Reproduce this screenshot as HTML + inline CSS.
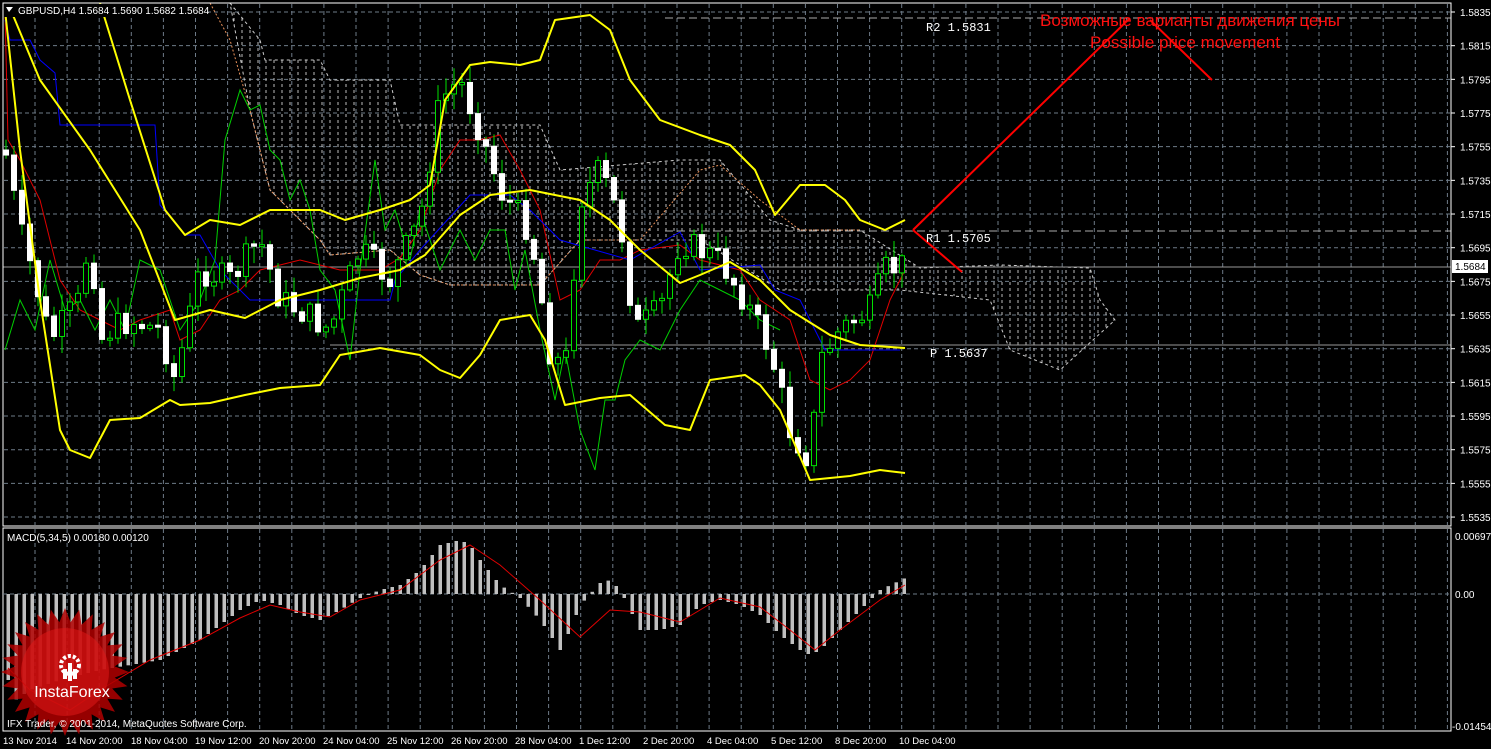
<!DOCTYPE html>
<html><head><meta charset="utf-8"><style>
html,body{margin:0;padding:0;background:#000;overflow:hidden}
svg{display:block;font-family:"Liberation Sans",sans-serif;font-size:11px}
text{fill:#fff}
</style></head><body>
<svg id="s" width="1491" height="749" xmlns="http://www.w3.org/2000/svg">
<defs>
<pattern id="dots" width="8" height="6" patternUnits="userSpaceOnUse">
<line x1="2" y1="0" x2="2" y2="3" stroke="#bbb" stroke-width="1"/>
</pattern>
</defs>
<rect width="1491" height="749" fill="#000"/>
<g id="grid" stroke="#6e7b88" stroke-dasharray="4,3" stroke-width="1"></g>
<polygon points="230,3 260,40 265,60 320,60 330,80 390,80 400,125 540,125 560,170 680,160 720,160 770,220 800,230 860,230 920,268 1000,265 1090,268 1100,300 1115,320 1060,370 1010,350 990,300 900,290 780,290 700,240 580,240 540,285 450,285 420,275 390,250 330,255 320,240 270,190 250,110" fill="url(#dots)" stroke="#ccc" stroke-dasharray="3,3" stroke-width="1"/>
<polyline points="210,3 230,40 250,110 270,190 320,240 330,255 390,250 420,275 450,285 540,285 580,240 640,240 700,170 720,165 760,200 800,230 860,230" fill="none" stroke="#e8915a" stroke-dasharray="2,2"/>
<line x1="665" y1="18" x2="1451" y2="18" stroke="#aaa" stroke-dasharray="8,4"/>
<line x1="665" y1="231" x2="1451" y2="231" stroke="#aaa" stroke-dasharray="8,4"/>
<line x1="3" y1="267" x2="1451" y2="267" stroke="#999"/>
<line x1="330" y1="345" x2="1451" y2="345" stroke="#999"/>
<polyline points="5,10 8,140 20,160 40,200 60,280 80,310 100,320 120,330 140,320 170,310 180,340 200,330 220,300 240,290 260,270 300,260 340,270 380,270 400,258 420,230 440,170 460,140 480,140 500,135 520,170 540,210 560,300 580,290 600,260 620,260 640,250 680,245 700,260 740,270 760,300 790,320 810,380 830,390 850,380 870,360 890,300 905,270" fill="none" stroke="#e00000" stroke-width="1"/>
<polyline points="5,20 10,40 30,40 40,60 55,73 60,125 155,125 160,205 185,235 200,235 220,270 250,300 390,300 395,280 420,250 470,195 510,195 530,210 560,240 630,260 680,232 700,270 760,265 775,290 800,300 825,350 900,350" fill="none" stroke="#0000ff" stroke-width="1"/>
<polyline points="5,350 20,300 35,330 50,260 65,310 80,300 95,330 110,300 125,330 140,260 160,270 180,330 200,300 215,260 225,140 240,90 250,110 260,105 270,150 280,160 290,200 300,180 310,210 320,270 335,290 350,360 360,270 375,160 385,230 395,210 410,260 420,210 440,270 460,230 475,260 490,230 505,230 515,290 525,250 540,330 555,400 565,350 580,430 595,470 605,400 615,400 625,360 640,340 660,350 680,310 700,280 720,290 740,300 760,320 780,330" fill="none" stroke="#00d000" stroke-width="1"/>
<g id="candles"></g>
<g fill="none" stroke="#ffff00" stroke-width="2" stroke-linejoin="round">
<polyline points="100,3 130,100 165,210 185,235 210,220 240,225 270,210 320,210 345,220 380,210 410,200 430,185 445,100 470,65 490,62 520,65 540,60 555,20 590,15 610,30 630,80 660,120 700,135 730,145 755,170 775,215 800,185 825,185 845,200 860,220 885,230 905,220"/>
<polyline points="10,8 40,80 90,150 140,230 175,320 210,310 245,318 280,300 320,290 360,278 400,270 425,255 460,215 490,195 530,190 580,200 610,220 640,250 680,283 700,275 730,262 760,280 790,310 830,335 860,345 905,348"/>
<polyline points="5,10 20,150 40,300 60,430 70,450 90,458 110,420 140,418 170,400 180,405 210,403 245,395 280,388 320,385 340,355 380,348 420,355 440,370 460,378 480,355 500,320 530,315 545,340 565,405 600,398 630,395 665,425 690,430 710,380 745,375 760,385 780,410 810,480 850,476 880,470 905,473"/>
</g>
<g stroke="#ff0000" stroke-width="2" fill="none">
<line x1="913" y1="230" x2="1130" y2="18"/>
<line x1="1150" y1="20" x2="1212" y2="80"/>
<line x1="913" y1="230" x2="962" y2="272"/>
</g>
<text x="1190" y="26" text-anchor="middle" style="font-size:17px;fill:#ff1010">Возможные варианты движения цены</text>
<text x="1185" y="48" text-anchor="middle" style="font-size:17px;fill:#ff1010">Possible price movement</text>
<text x="926" y="31" style="font-family:'Liberation Mono',monospace;font-size:12px">R2 1.5831</text>
<text x="926" y="242" style="font-family:'Liberation Mono',monospace;font-size:12px">R1 1.5705</text>
<text x="930" y="357" style="font-family:'Liberation Mono',monospace;font-size:12px">P 1.5637</text>
<rect x="3" y="3" width="1448" height="523" fill="none" stroke="#fff"/>
<rect x="3" y="528" width="1448" height="203" fill="none" stroke="#fff"/>
<line x1="3" y1="594" x2="1451" y2="594" stroke="#6e7b88" stroke-dasharray="4,3"/>
<g id="macd"></g>
<polyline points="8,668 30,690 70,710 100,690 150,660 200,640 240,618 270,605 300,612 330,617 360,600 400,590 440,560 470,545 500,565 540,600 580,637 610,610 640,612 680,622 720,598 760,607 790,630 815,650 840,630 880,600 905,585" fill="none" stroke="#e00000"/>
<polygon id="star" fill="#b00000" opacity="0.85"/>
<circle cx="65" cy="672" r="44" fill="#e01818" opacity="0.55"/>
<g fill="#fff" transform="translate(70,665)">
<circle cx="0" cy="0" r="9" fill="none" stroke="#fff" stroke-width="4" stroke-dasharray="3,2"/>
<rect x="-2" y="-2" width="4" height="18"/>
<rect x="-7" y="4" width="4" height="10"/><rect x="3" y="4" width="4" height="10"/>
</g>
<text x="72" y="697" text-anchor="middle" style="font-size:16px">InstaForex</text>
<text x="7" y="727" style="font-size:10px">IFX Trader, © 2001-2014, MetaQuotes Software Corp.</text>
<rect x="4" y="4" width="200" height="13" fill="#000"/>
<text x="18" y="14" style="font-size:10px">GBPUSD,H4  1.5684 1.5690 1.5682 1.5684</text>
<polygon points="6,7 13,7 9,12" fill="#fff"/>
<text x="7" y="541" style="font-size:10px">MACD(5,34,5) 0.00180 0.00120</text>
<rect x="1452" y="260" width="36" height="13" fill="#fff"/>
<text x="1455" y="270" style="font-size:10px;fill:#000">1.5684</text>
<g style="font-size:10px">
<text x="1455" y="540">0.00697</text><text x="1455" y="598">0.00</text><text x="1452" y="730">-0.01454</text>
</g>
<g style="font-size:9.5px">
<text x="3" y="744">13 Nov 2014</text><text x="66" y="744">14 Nov 20:00</text><text x="131" y="744">18 Nov 04:00</text><text x="195" y="744">19 Nov 12:00</text><text x="259" y="744">20 Nov 20:00</text><text x="323" y="744">24 Nov 04:00</text><text x="387" y="744">25 Nov 12:00</text><text x="451" y="744">26 Nov 20:00</text><text x="515" y="744">28 Nov 04:00</text><text x="579" y="744">1 Dec 12:00</text><text x="643" y="744">2 Dec 20:00</text><text x="707" y="744">4 Dec 04:00</text><text x="771" y="744">5 Dec 12:00</text><text x="835" y="744">8 Dec 20:00</text><text x="899" y="744">10 Dec 04:00</text>
</g>
<g id="plabels" style="font-size:10px"></g>
</svg>
<script>
(function(){
var NS="http://www.w3.org/2000/svg";
function el(p,t,a){var e=document.createElementNS(NS,t);for(var k in a)e.setAttribute(k,a[k]);p.appendChild(e);return e;}
var g=document.getElementById('grid');
for(var x=35;x<1451;x+=32.1){el(g,'line',{x1:x,y1:4,x2:x,y2:525});el(g,'line',{x1:x,y1:529,x2:x,y2:730});}
var pl=document.getElementById('plabels');
for(var i=0;i<16;i++){var y=12+i*33.67;el(g,'line',{x1:4,y1:y,x2:1450,y2:y});
var t=el(pl,'text',{x:1460,y:y+4});t.textContent=(1.5835-i*0.002).toFixed(4);
el(pl,'line',{x1:1451,y1:y,x2:1455,y2:y,stroke:'#fff'});}
function interp(pts,x){for(var i=1;i<pts.length;i++){if(x<=pts[i][0]){var a=pts[i-1],b=pts[i];return a[1]+(b[1]-a[1])*(x-a[0])/(b[0]-a[0]);}}return pts[pts.length-1][1];}
var P=[[0,150],[5,150],[20,230],[35,280],[50,340],[65,320],[80,300],[90,230],[100,340],[110,330],[130,320],[160,330],[175,380],[200,270],[230,280],[260,240],[280,300],[300,310],[330,330],[360,250],[390,280],[420,220],[440,100],[460,80],[480,130],[500,190],[530,230],[550,350],[565,370],[580,200],[600,170],[620,220],[635,330],[660,310],[680,240],[720,260],[745,300],[770,350],[790,430],[810,460],[820,360],[840,330],[870,310],[885,270],[905,265]];
var c=document.getElementById('candles');var seed=7;function r(){seed=(seed*9301+49297)%233280;return seed/233280;}
var prev=interp(P,0);
for(var x=6;x<=905;x+=8){var cl=interp(P,x)+(r()-0.5)*30;var op=prev;var hi=Math.min(op,cl)-r()*15-2,lo=Math.max(op,cl)+r()*15+2;
el(c,'line',{x1:x,y1:hi,x2:x,y2:lo,stroke:'#00e000'});
var ty=Math.min(op,cl),h=Math.max(2,Math.abs(op-cl));
if(cl<op)el(c,'rect',{x:x-2.5,y:ty,width:5,height:h,fill:'#000',stroke:'#00e000'});
else el(c,'rect',{x:x-2.5,y:ty,width:5,height:h,fill:'#fff',stroke:'#fff'});
prev=cl;}
var M=[[8,680],[15,700],[30,690],[60,680],[100,670],[130,665],[160,660],[180,650],[200,640],[220,625],[240,610],[260,600],[280,605],[300,615],[320,620],[340,610],[360,598],[380,590],[400,585],[420,570],[440,545],[460,540],[470,545],[480,560],[500,585],[520,598],[540,620],[560,650],[570,630],[580,605],[600,583],[610,580],[620,590],[640,630],[660,630],[680,625],[700,605],[720,600],[740,605],[760,615],[780,635],[800,650],[810,655],[820,650],[840,630],[860,610],[880,590],[905,578]];
var m=document.getElementById('macd');
for(var x=8;x<=906;x+=8){var y=interp(M,x);el(m,'rect',{x:x-1.5,y:Math.min(y,594),width:3.5,height:Math.max(1,Math.abs(y-594)),fill:'#c0c0c0'});}
var s=[],n=28;for(var i=0;i<2*n;i++){var a=i*Math.PI/n,rr=i%2?50:64;s.push((65+rr*Math.cos(a)).toFixed(1)+','+(672+rr*Math.sin(a)).toFixed(1));}
document.getElementById('star').setAttribute('points',s.join(' '));
})();
</script>
</body></html>
